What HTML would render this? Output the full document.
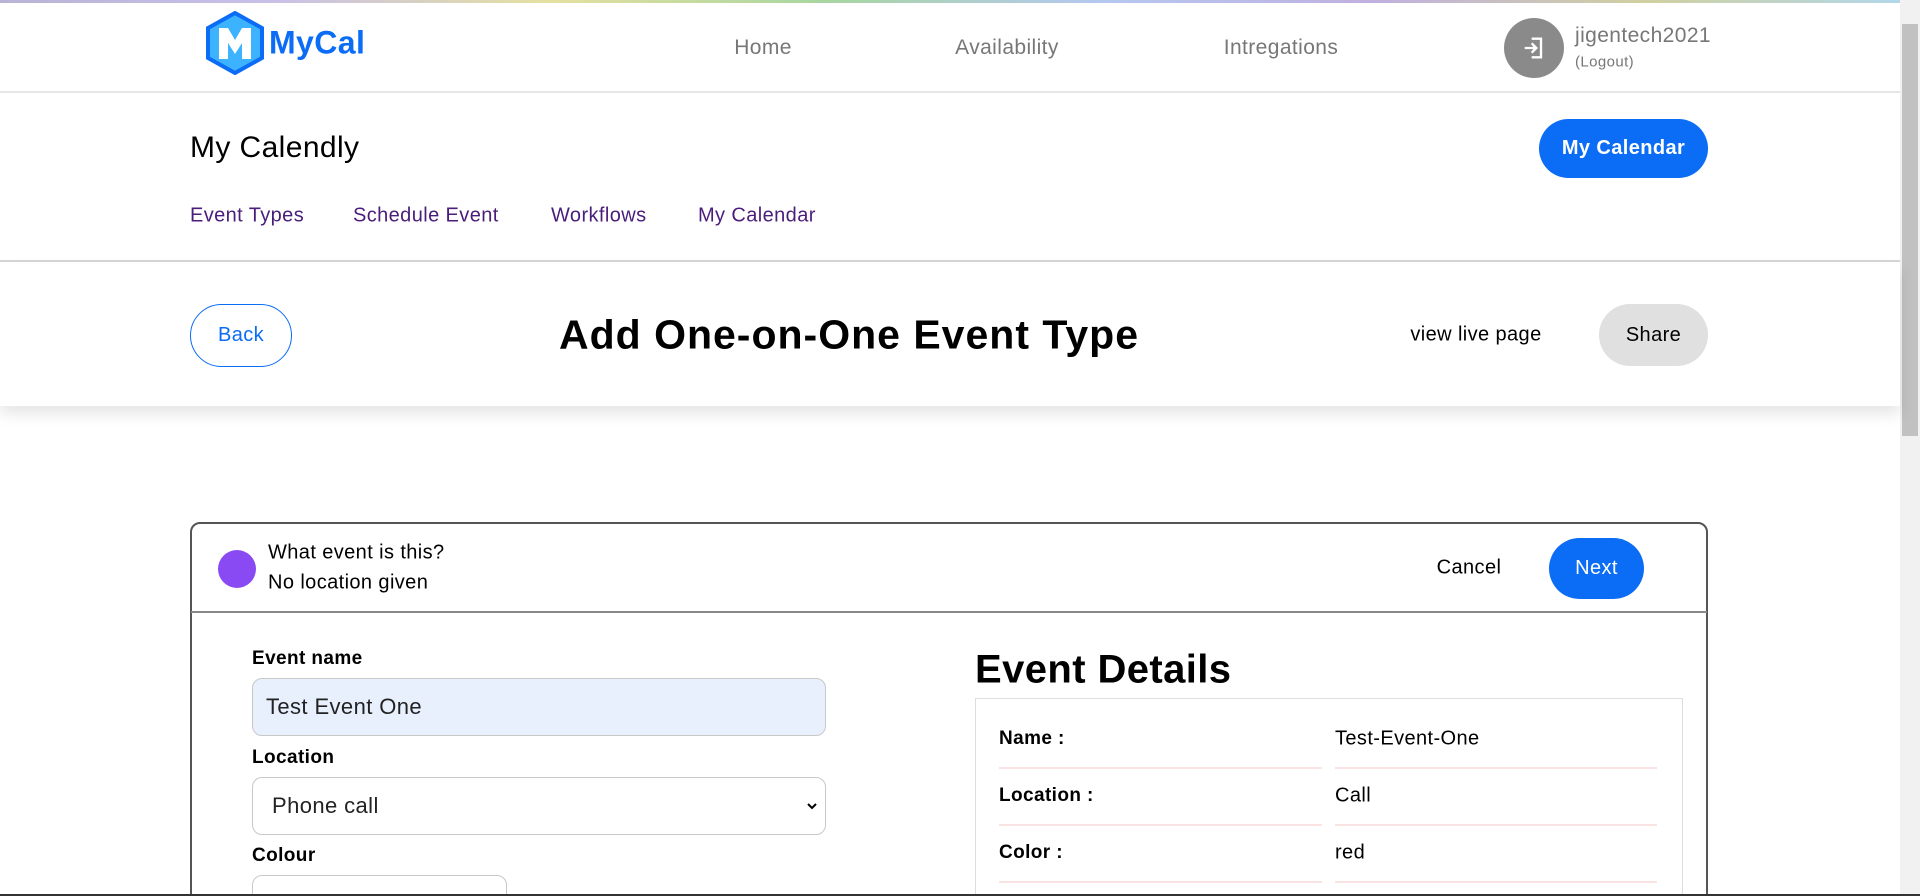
<!DOCTYPE html>
<html><head><meta charset="utf-8"><style>
*{box-sizing:border-box;margin:0;padding:0}
html,body{width:1920px;height:896px;overflow:hidden}
body{background:#fff;font-family:"Liberation Sans",sans-serif;color:#000}
#w{position:relative;width:1920px;height:896px;overflow:hidden}
.a{position:absolute;white-space:nowrap;letter-spacing:0.4px}
.c{transform:translate(-50%,-50%)}
.m{transform:translateY(-50%)}
</style></head><body><div id="w">
<div class="a" style="left:0;top:0;width:1920px;height:3px;background:linear-gradient(90deg,#b9b3d6,#c9c0e8,#e5e0a0,#a8d6a0,#b5c8f0,#c0b0e0,#d0d0a0,#b0d8f0)"></div>
<svg class="a" style="left:205px;top:11px" width="60" height="64" viewBox="0 0 60 64">
<polygon points="30,2 57,17 57,47 30,62 3,47 3,17" fill="#3db3ff" stroke="#0b6cf5" stroke-width="4"/>
<path d="M14 48V17h9l7 12 7-12h9v31h-9V32l-7 11-7-11v16z" fill="#fff"/>
</svg>
<div class="a m" style="left:269px;top:43px;font-size:32px;font-weight:bold;color:#0b6cf5">MyCal</div>
<div class="a c" style="left:763px;top:48px;font-size:21px;color:#777">Home</div>
<div class="a c" style="left:1007px;top:48px;font-size:21px;color:#777">Availability</div>
<div class="a c" style="left:1281px;top:48px;font-size:21px;color:#777">Intregations</div>
<div class="a" style="left:1504px;top:18px;width:60px;height:60px;border-radius:50%;background:#8a8a8a"></div>
<svg class="a" style="left:1520px;top:34px" width="28" height="28" viewBox="0 0 24 24" fill="none" stroke="#fff" stroke-width="2"><path d="M10 4h8v16h-8M4 12h10M10 8l4 4-4 4"/></svg>
<div class="a m" style="left:1575px;top:36px;font-size:21px;color:#777">jigentech2021</div>
<div class="a m" style="left:1575px;top:62px;font-size:15px;color:#777">(Logout)</div>
<div class="a" style="left:0;top:91px;width:1900px;height:2px;background:#e6e6e6"></div>
<div class="a" style="left:1900px;top:0;width:20px;height:896px;background:#f1f1f1"></div>
<div class="a" style="left:1902px;top:24px;width:16px;height:412px;background:#c1c1c1"></div>
<div class="a m" style="left:190px;top:148px;font-size:30px">My Calendly</div>
<div class="a" style="left:1539px;top:119px;width:169px;height:59px;border-radius:30px;background:#0b6cf5;color:#fff;font-weight:bold;font-size:20px;line-height:59px;text-align:center">My Calendar</div>
<div class="a m" style="left:190px;top:216px;font-size:20px;color:#4b1d7a">Event Types</div>
<div class="a m" style="left:353px;top:216px;font-size:20px;color:#4b1d7a">Schedule Event</div>
<div class="a m" style="left:551px;top:216px;font-size:20px;color:#4b1d7a">Workflows</div>
<div class="a m" style="left:698px;top:216px;font-size:20px;color:#4b1d7a">My Calendar</div>
<div class="a" style="left:0;top:260px;width:1900px;height:2px;background:#d6d6d6"></div>
<div class="a" style="left:0;top:262px;width:1900px;height:144px;background:#fff;box-shadow:0 8px 14px rgba(0,0,0,0.1)"></div>
<div class="a" style="left:190px;top:304px;width:102px;height:63px;border:1px solid #0b6cf5;border-radius:32px;color:#0b6cf5;font-size:20px;line-height:61px;text-align:center">Back</div>
<div class="a c" style="left:849px;top:335px;font-size:41px;font-weight:bold;letter-spacing:1px">Add One-on-One Event Type</div>
<div class="a c" style="left:1476px;top:335px;font-size:20px">view live page</div>
<div class="a" style="left:1599px;top:304px;width:109px;height:62px;border-radius:31px;background:#e0e0e0;font-size:20px;line-height:62px;text-align:center">Share</div>
<div class="a" style="left:190px;top:522px;width:1518px;height:400px;border:2px solid #555;border-radius:10px"></div>
<div class="a" style="left:191px;top:611px;width:1516px;height:2px;background:#888"></div>
<div class="a" style="left:218px;top:550px;width:38px;height:38px;border-radius:50%;background:#8a4af3"></div>
<div class="a m" style="left:268px;top:553px;font-size:20px">What event is this?</div>
<div class="a m" style="left:268px;top:583px;font-size:20px">No location given</div>
<div class="a c" style="left:1469px;top:568px;font-size:20px">Cancel</div>
<div class="a" style="left:1549px;top:538px;width:95px;height:61px;border-radius:31px;background:#0b6cf5;color:#fff;font-size:20px;line-height:61px;text-align:center">Next</div>
<div class="a m" style="left:252px;top:659px;font-size:19px;font-weight:bold">Event name</div>
<div class="a" style="left:252px;top:678px;width:574px;height:58px;background:#e8f0fe;border:1px solid #c8c8c8;border-radius:10px;font-size:22px;line-height:56px;padding-left:13px;color:#222">Test Event One</div>
<div class="a m" style="left:252px;top:758px;font-size:19px;font-weight:bold">Location</div>
<div class="a" style="left:252px;top:777px;width:574px;height:58px;background:#fff;border:1px solid #c8c8c8;border-radius:10px;font-size:22px;line-height:56px;padding-left:19px;color:#222">Phone call</div>
<svg class="a" style="left:806px;top:801px" width="12" height="10" viewBox="0 0 12 10"><path d="M2 3l4 4 4-4" fill="none" stroke="#000" stroke-width="2"/></svg>
<div class="a m" style="left:252px;top:856px;font-size:19px;font-weight:bold">Colour</div>
<div class="a" style="left:252px;top:875px;width:255px;height:40px;border:1px solid #c8c8c8;border-radius:10px"></div>
<div class="a m" style="left:975px;top:670px;font-size:40px;font-weight:bold">Event Details</div>
<div class="a" style="left:975px;top:698px;width:708px;height:220px;border:1px solid #ddd"></div>
<div class="a m" style="left:999px;top:739px;font-size:19px;font-weight:bold">Name :</div>
<div class="a m" style="left:1335px;top:739px;font-size:20px">Test-Event-One</div>
<div class="a m" style="left:999px;top:796px;font-size:19px;font-weight:bold">Location :</div>
<div class="a m" style="left:1335px;top:796px;font-size:20px">Call</div>
<div class="a m" style="left:999px;top:853px;font-size:19px;font-weight:bold">Color :</div>
<div class="a m" style="left:1335px;top:853px;font-size:20px">red</div>
<div class="a" style="left:999px;top:767px;width:323px;height:2px;background:#fbe3e3"></div>
<div class="a" style="left:1335px;top:767px;width:322px;height:2px;background:#fbe3e3"></div>
<div class="a" style="left:999px;top:824px;width:323px;height:2px;background:#fbe3e3"></div>
<div class="a" style="left:1335px;top:824px;width:322px;height:2px;background:#fbe3e3"></div>
<div class="a" style="left:999px;top:881px;width:323px;height:2px;background:#fbe3e3"></div>
<div class="a" style="left:1335px;top:881px;width:322px;height:2px;background:#fbe3e3"></div>
<div class="a" style="left:0;top:894px;width:1920px;height:2px;background:#333"></div>
</div></body></html>
